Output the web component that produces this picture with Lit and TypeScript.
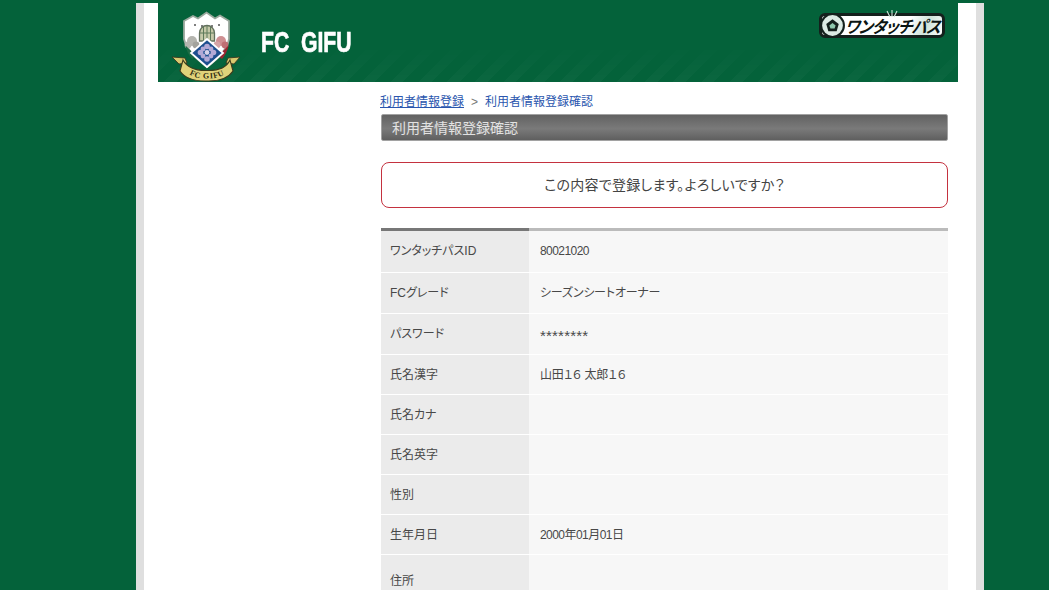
import { LitElement, html, css, svg } from "lit";
import { customElement } from "lit/decorators.js";

const rows: { k: string; v: string; cls: string; vc?: string }[] = [
  { k: "ワンタッチパスID", v: "80021020", cls: "r1", vc: "num" },
  { k: "FCグレード", v: "シーズンシートオーナー", cls: "r2", vc: "kana" },
  { k: "パスワード", v: "********", cls: "r3", vc: "pw" },
  { k: "氏名漢字", v: "山田１６ 太郎１６", cls: "r", vc: "kana" },
  { k: "氏名カナ", v: "", cls: "r" },
  { k: "氏名英字", v: "", cls: "r" },
  { k: "性別", v: "", cls: "r" },
  { k: "生年月日", v: "2000年01月01日", cls: "r", vc: "num" },
  { k: "住所", v: "", cls: "rl" },
];

const crest = svg`
<svg class="crest" viewBox="0 0 85 80" width="85" height="80" aria-hidden="true">
  <path d="M19 15 L28 10 L33 12.5 L41.5 6.5 L50 12.5 L55 9.5 L64 15 L64 33 Q62 46 42 61 Q22 46 19 33 Z" fill="#fff" stroke="#9aa89d" stroke-width="1.8"/>
  <circle cx="30" cy="19" r="1" fill="#555"/><circle cx="37" cy="20" r="1" fill="#555"/><circle cx="47" cy="20" r="1" fill="#555"/><circle cx="54" cy="19" r="1" fill="#555"/>
  <circle cx="27" cy="35" r="5" fill="#b4b4ae"/><circle cx="23" cy="39" r="3.4" fill="#b4b4ae"/><circle cx="31" cy="39" r="3.4" fill="#a3a39d"/>
  <circle cx="56" cy="35" r="5" fill="#cf8f92"/><circle cx="52" cy="39" r="3.4" fill="#d5a3a5"/><circle cx="60" cy="39" r="3.4" fill="#bf6f74"/>
  <path d="M21 40 L31 50 L27 53 Q22 47 20.5 40 Z" fill="#1d6b45"/>
  <path d="M63 40 L53 50 L57 53 Q62 47 63.5 40 Z" fill="#9b2530"/>
  <path d="M34.5 35 V27 A7.5 7.5 0 0 1 49.5 27 V35 Z" fill="#c5c8a8" stroke="#62705c" stroke-width="1.3"/>
  <path d="M38.5 35 V21 M42 35 V20 M45.5 35 V21 M35 27 H49" stroke="#5f7a5a" stroke-width="1"/>
  <path d="M42 33 L58 47 L42 61 L26 47 Z" fill="#1e4f8f" stroke="#fff" stroke-width="1.8"/>
  <g fill="#b3a9d6">
    <circle cx="42" cy="40.5" r="2.8"/><circle cx="42" cy="53" r="2.8"/><circle cx="35.5" cy="46.5" r="2.8"/><circle cx="48.5" cy="46.5" r="2.8"/>
    <circle cx="38" cy="43" r="2.4"/><circle cx="46" cy="43" r="2.4"/><circle cx="38" cy="50" r="2.4"/><circle cx="46" cy="50" r="2.4"/>
    <circle cx="42" cy="46.5" r="2.4" fill="#d7d2ea"/>
  </g>
  <path d="M7 51 L20 52 L22 57 L14 58 Z" fill="#d9c96f" stroke="#3a3a1e" stroke-width=".9"/>
  <path d="M75 51 L63 52 L61 57 L69 58 Z" fill="#d9c96f" stroke="#3a3a1e" stroke-width=".9"/>
  <path d="M18 54 Q24 65 42 64.5 Q60 65 65 54 L68 65 Q61 75.5 42 75 Q22 75.5 15 65 Z" fill="#e0d27a" stroke="#3d3b1c" stroke-width="1.1"/>
  <path id="rib" d="M20 65 Q28 73 42 72.4 Q56 73 64 65" fill="none"/>
  <text class="rt" fill="#2f2d12"><textPath href="#rib" startOffset="50%" text-anchor="middle">FC GIFU</textPath></text>
</svg>`;

const pass = svg`
<svg class="ball" viewBox="0 0 26 26" aria-hidden="true">
  <circle cx="13" cy="13" r="11" fill="#dcebe4" stroke="#14201c" stroke-width="2"/>
  <path d="M13 7 L19 11.5 L17 18.5 L9 18.5 L7 11.5 Z" fill="#14201c"/>
  <path d="M13 10.5 L16 13 L15 16 L11 16 L10 13 Z" fill="#8fc9ad"/>
</svg>`;

const burst = svg`
<svg class="burst" viewBox="0 0 16 8" aria-hidden="true">
  <path d="M3 1 L6 7 M8 0 L8 7 M13 1 L10 7" stroke="#cfe6da" stroke-width="1.1" fill="none"/>
</svg>`;

@customElement("app-root")
export class AppRoot extends LitElement {
  static styles = css`
    :host {
      display: block;
      height: 590px;
      overflow: hidden;
      background: #04623a;
      font-family: "Liberation Sans", "Noto Sans CJK JP", sans-serif;
      color: #444;
      font-size: 12px;
    }
    .page {
      width: 818px;
      height: 587px;
      margin: 3px 0 0 136px;
      background: #fff;
      border-left: 8px solid #dfdfdf;
      border-right: 8px solid #dfdfdf;
      padding-left: 14px;
      overflow: hidden;
    }
    .header {
      position: relative;
      width: 800px;
      height: 79px;
      background: #04623a;
      display: flex;
      justify-content: space-between;
      overflow: hidden;
    }
    .header::before {
      content: "";
      position: absolute;
      inset: 0;
      background: repeating-linear-gradient(135deg, rgba(255,255,255,.03) 0 9px, transparent 9px 20px);
      -webkit-mask-image: linear-gradient(to top, #000, transparent 50%);
      mask-image: linear-gradient(to top, #000, transparent 50%);
    }
    .brand { position: relative; display: flex; align-items: flex-start; }
    .crest { display: block; margin: 3px 0 0 7px; flex: none; }
    .rt { font: bold 8px "Liberation Serif", serif; letter-spacing: .6px; }
    .gifu {
      margin: 21px 0 0 11px;
      width: 90px;
      color: #fff;
      font: bold 29px/36px "Liberation Sans", sans-serif;
      -webkit-text-stroke: .7px #fff;
      white-space: pre;
      transform: scaleX(.73);
      transform-origin: left center;
    }
    .pass {
      position: relative;
      margin: 10px 13px 0 0;
      width: 126px;
      height: 25px;
      box-sizing: border-box;
      background: linear-gradient(115deg, #fff 70%, #cfe3d9 85%, #fff);
      border: 3px solid #14201c;
      border-radius: 6px;
      display: flex;
      align-items: center;
    }
    .ball { flex: none; margin-left: -3px; width: 27px; height: 27px; }
    .burst { position: absolute; left: 62px; top: -6px; width: 16px; height: 8px; }
    .pass span {
      margin-left: 1px;
      font: 700 17px/19px "Noto Sans CJK JP", sans-serif;
      font-feature-settings: "palt";
      letter-spacing: -.6px;
      color: #0c1512;
      white-space: nowrap;
      transform: skewX(-18deg) scaleX(.9);
      transform-origin: left center;
    }
    .main { margin-left: 222px; width: 568px; }
    .crumb {
      height: 32px;
      box-sizing: border-box;
      padding-top: 11px;
      line-height: 16px;
      font-family: "Noto Sans CJK JP", sans-serif;
      font-feature-settings: "palt";
      color: #2b56ae;
      white-space: nowrap;
    }
    .crumb a { color: #2b56ae; }
    .crumb a.cur { text-decoration: none; }
    .sep { color: #777; margin: 0 7px; font-family: "Liberation Sans", sans-serif; }
    .title {
      height: 27px;
      box-sizing: border-box;
      margin: 0 0 0 1px;
      border: 1px solid #a2a2a2;
      border-radius: 2px;
      background: linear-gradient(#626262, #7a7a7a 55%, #5f5f5f);
      color: #e2e2e2;
      padding-left: 10px;
      font: normal 14px/25px "Noto Sans CJK JP", sans-serif;
      white-space: nowrap;
    }
    .msg {
      margin: 21px 0 20px 1px;
      height: 46px;
      box-sizing: border-box;
      border: 1px solid #c4323f;
      border-radius: 8px;
      text-align: center;
      font: 14px/43px "Noto Sans CJK JP", sans-serif;
      font-feature-settings: "palt";
      letter-spacing: .25px;
      color: #444;
    }
    table {
      width: 567px;
      margin-left: 1px;
      border-collapse: separate;
      border-spacing: 0;
      table-layout: fixed;
      font-feature-settings: "palt";
    }
    th, td {
      padding: 0;
      text-align: left;
      font-weight: normal;
      font-size: 12px;
      line-height: 16px;
      color: #484848;
      border-bottom: 1px solid #fff;
      box-sizing: border-box;
    }
    th { width: 148px; padding-left: 9px; background: #ebebeb; }
    td { padding-left: 11px; background: #f7f7f7; }
    tr.first th { border-top: 3px solid #777; }
    tr.first td { border-top: 3px solid #bbb; }
    tr.r1 { height: 45px; }
    tr.r2, tr.r3 { height: 41px; }
    tr.r { height: 40px; }
    tr.rl { height: 50px; }
    tr.r1 > *, tr.r2 > * { padding-bottom: 1px; }
    tr.rl > * { padding-top: 2px; }
    td.num { letter-spacing: -.55px; }
    td.kana { letter-spacing: -.2px; }
    td.pw { font-size: 15px; padding-top: 3px; letter-spacing: .2px; }
  `;

  render() {
    return html`
      <div class="page">
        <header class="header">
          <div class="brand">${crest}<div class="gifu">FC  GIFU</div></div>
          <div class="pass">${burst}${pass}<span>ワンタッチパス</span></div>
        </header>
        <main class="main">
          <nav class="crumb"><a href="#">利用者情報登録</a><span class="sep">&gt;</span><a class="cur" href="#">利用者情報登録確認</a></nav>
          <h1 class="title">利用者情報登録確認</h1>
          <div class="msg">この内容で登録します。よろしいですか？</div>
          <table>
            <tbody>
              ${rows.map(
                (r, i) => html`<tr class="${r.cls} ${i === 0 ? "first" : ""}"><th>${r.k}</th><td class="${r.vc ?? ""}">${r.v}</td></tr>`
              )}
            </tbody>
          </table>
        </main>
      </div>
    `;
  }
}
